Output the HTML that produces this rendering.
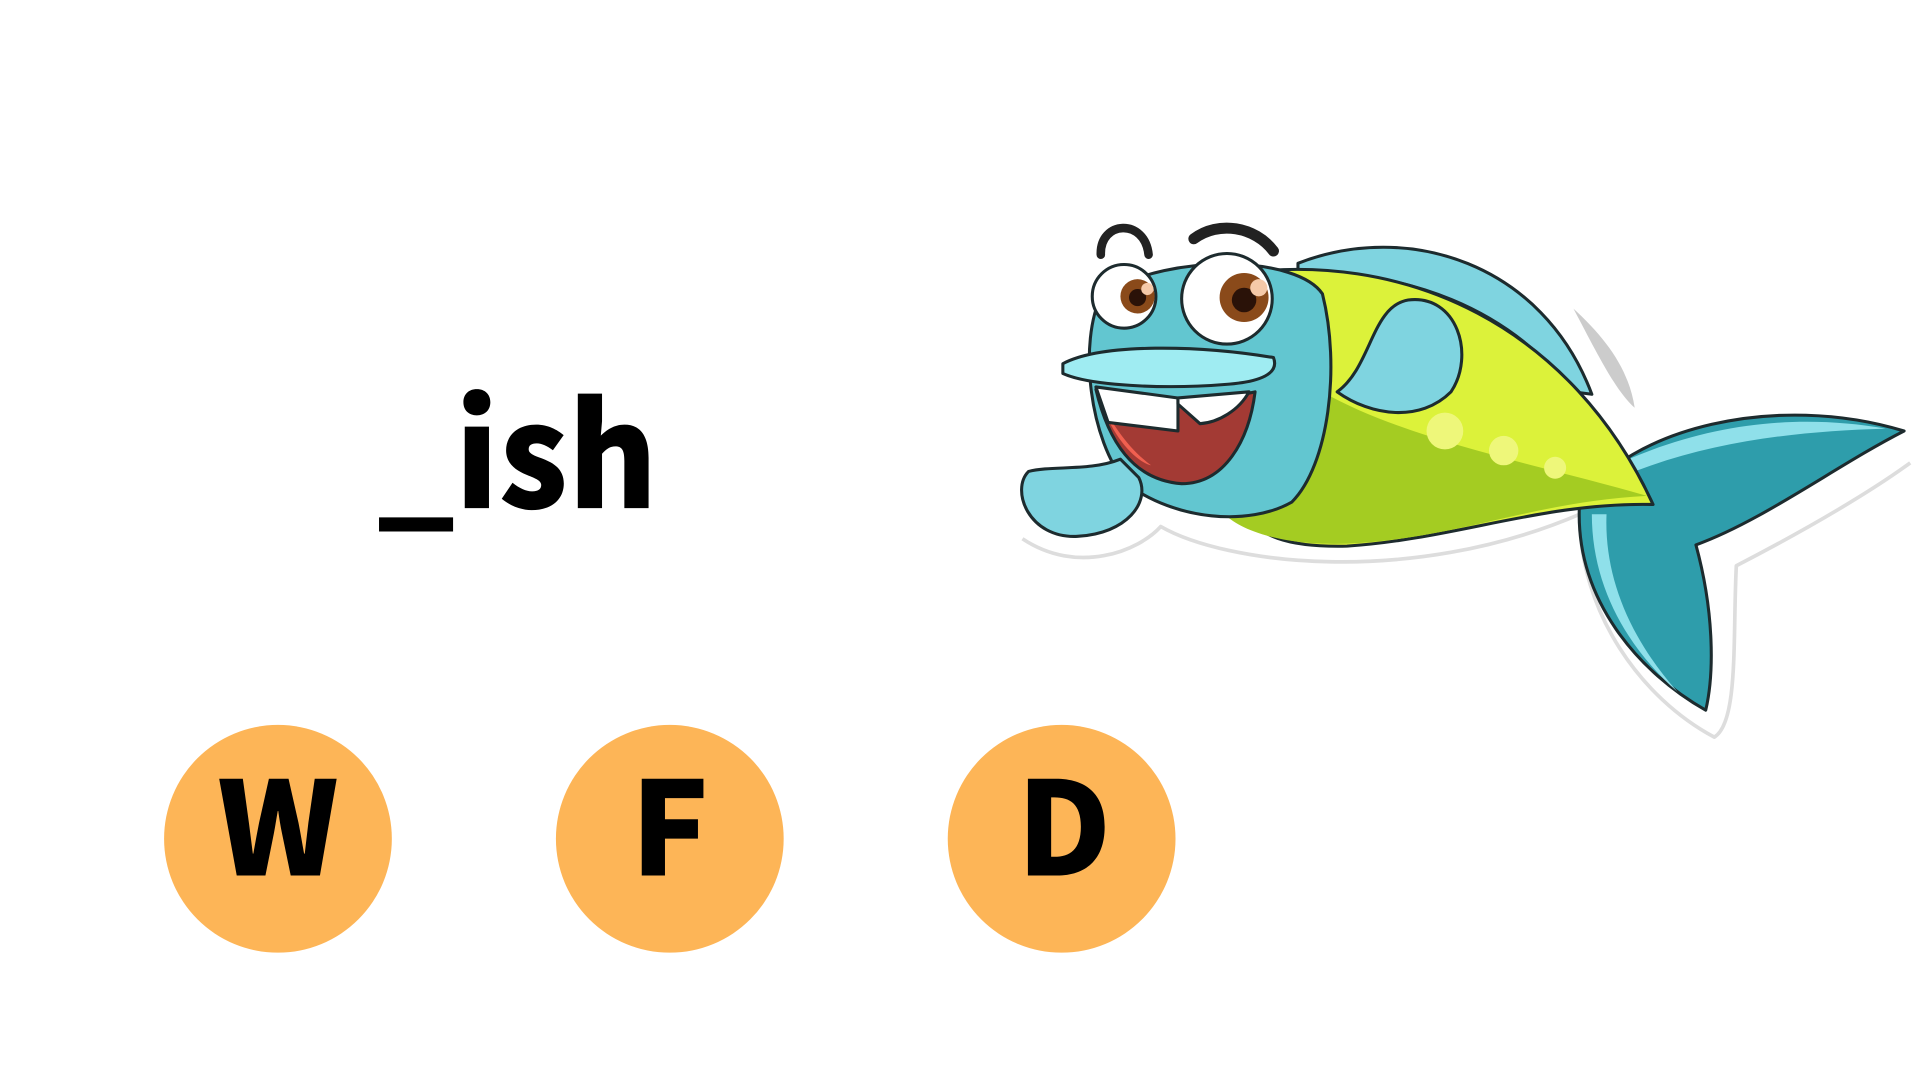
<!DOCTYPE html>
<html><head><meta charset="utf-8"><style>
html,body{margin:0;padding:0;background:#fff;width:1920px;height:1080px;overflow:hidden}
svg{display:block}
</style></head><body>
<svg width="1920" height="1080" viewBox="0 0 1568 882" xmlns="http://www.w3.org/2000/svg">
<rect width="1568" height="882" fill="#fff"/>
<text x="308" y="415" textLength="229" lengthAdjust="spacingAndGlyphs" font-family="Noto Sans CJK JP, Liberation Sans, sans-serif" font-weight="900" font-size="117" fill="#000">_ish</text>
<g font-family="Noto Sans CJK JP, Liberation Sans, sans-serif" font-weight="900" font-size="106" fill="#000" text-anchor="middle">
<circle cx="227" cy="685" r="93" fill="#FDB557"/><text x="227" y="715">W</text>
<circle cx="547" cy="685" r="93" fill="#FDB557"/><text x="547" y="715">F</text>
<circle cx="867" cy="685" r="93" fill="#FDB557"/><text x="869" y="715">D</text>
</g>
<g stroke="#1d2b2e" stroke-width="2.5" stroke-linejoin="round">
<path d="M835,440 C880,470 930,450 948,430 C1000,460 1150,480 1290,420 C1290,500 1340,570 1400,602 C1420,590 1415,520 1418,462 C1480,430 1530,400 1560,378" fill="none" stroke="#ddd" stroke-width="3"/>
<path d="M1285,252 C1310,275 1330,300 1335,333 C1320,320 1305,290 1285,252Z" fill="#ccc" stroke="none"/>
<path d="M1290,410 C1330,350 1450,320 1555,352 C1500,380 1440,425 1385,445 C1400,500 1400,550 1393,580 C1340,550 1285,490 1290,410Z" fill="#2E9DAB"/>
<path d="M1330,375 C1400,345 1470,338 1540,350 C1470,352 1400,360 1335,385Z" fill="#8fe0ea" stroke="none"/>
<path d="M1300,420 C1300,480 1330,530 1370,565 C1330,520 1310,470 1312,420Z" fill="#8fe0ea" stroke="none"/>
<path d="M1060,215 C1150,180 1260,215 1300,322 L1285,320 C1230,250 1150,222 1060,222Z" fill="#7fd4e0"/>
<path d="M1000,225 C1150,200 1285,270 1350,412 C1260,410 1190,440 1100,446 C1010,448 980,420 1000,225Z" fill="#DCF23A"/>
<path d="M1080,320 C1150,360 1260,380 1345,405 C1250,410 1190,440 1100,444 C1040,446 1010,430 1000,420 C1040,400 1070,360 1080,320Z" fill="#A4CC22" stroke="none"/>
<circle cx="1180" cy="352" r="15" fill="#EEF77A" stroke="none"/>
<circle cx="1228" cy="368" r="12" fill="#EEF77A" stroke="none"/>
<circle cx="1270" cy="382" r="9" fill="#EEF77A" stroke="none"/>
<path d="M1092,320 C1120,300 1120,250 1150,245 C1190,240 1205,290 1185,320 C1160,345 1120,340 1092,320Z" fill="#7fd4e0"/>
<path d="M900,240 C960,205 1060,210 1080,240 C1095,300 1085,380 1055,410 C1020,430 960,425 920,395 C890,360 880,280 900,240Z" fill="#62C6D0"/>
<path d="M915,375 C890,385 860,380 840,385 C825,400 840,440 880,438 C920,436 940,410 930,390Z" fill="#7fd4e0"/>
<path d="M895,318 C930,328 990,328 1025,320 C1020,360 1000,395 965,395 C925,392 905,360 895,318Z" fill="#A33A34"/>
<path d="M900,330 C910,360 930,378 940,380 C920,365 908,345 900,330Z" fill="#F06050" stroke="none"/>
<path d="M895,316 L962,325 L962,352 L905,345Z" fill="#fff"/>
<path d="M962,325 L1020,320 C1012,335 995,345 980,346 L962,330Z" fill="#fff"/>
<path d="M868,297 C900,280 980,282 1040,292 C1045,305 1030,312 1000,314 C950,318 890,315 868,305Z" fill="#9fecf2"/>
<circle cx="918" cy="242" r="26" fill="#fff"/>
<circle cx="929" cy="242" r="14" fill="#8a4a1a" stroke="none"/>
<circle cx="929" cy="243" r="7" fill="#2a1208" stroke="none"/>
<circle cx="937" cy="236" r="5" fill="#f5c9a8" stroke="none"/>
<circle cx="1002" cy="244" r="37" fill="#fff"/>
<circle cx="1016" cy="243" r="20" fill="#8a4a1a" stroke="none"/>
<circle cx="1016" cy="245" r="10" fill="#2a1208" stroke="none"/>
<circle cx="1028" cy="235" r="7" fill="#f5c9a8" stroke="none"/>
<path d="M899,208 C898,180 935,178 938,208" fill="none" stroke="#222" stroke-width="7" stroke-linecap="round"/>
<path d="M975,195 C995,180 1025,185 1040,205" fill="none" stroke="#222" stroke-width="9" stroke-linecap="round"/>
</g>
</svg>
</body></html>
